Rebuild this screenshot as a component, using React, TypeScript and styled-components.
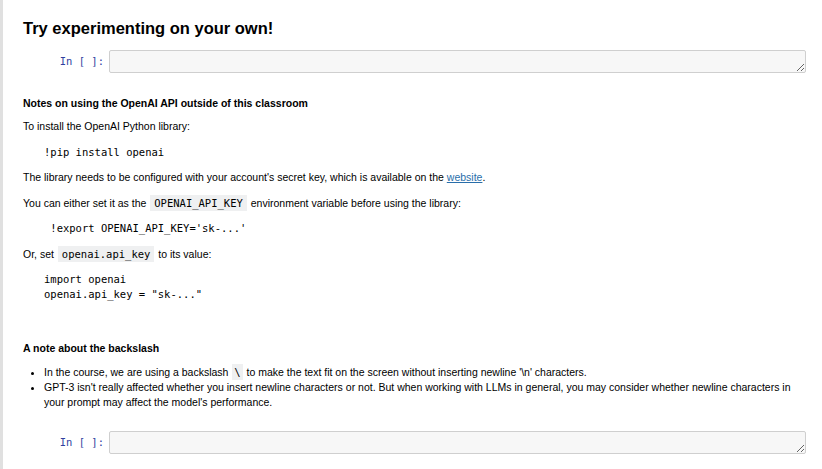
import React from "react";
import styled, { createGlobalStyle } from "styled-components";

const Global = createGlobalStyle`
  html, body { margin: 0; padding: 0; background: #fff; }
  body { font-family: "Liberation Sans", Arial, sans-serif; color: #000; }
`;

const Page = styled.div`
  border-left: 3px solid #e0e0e0;
  min-height: 469px;
  box-sizing: border-box;
  padding: 18px 16px 0 20px;
  display: flex;
  flex-direction: column;
`;

const Heading = styled.h1`
  margin: 0;
  font-size: 16.5px;
  line-height: 20px;
  font-weight: bold;
`;

const InputRow = styled.div<{ $top: number }>`
  display: flex;
  align-items: stretch;
  margin-top: ${(p) => p.$top}px;
`;

const Prompt = styled.div`
  width: 86px;
  box-sizing: border-box;
  padding: 4px 5px 0 0;
  text-align: right;
  font-family: "DejaVu Sans Mono", monospace;
  font-size: 10.5px;
  line-height: 15px;
  color: #303f9f;
`;

const CodeInput = styled.textarea`
  flex: 1;
  height: 23px;
  box-sizing: border-box;
  margin: 0;
  background: #f7f7f7;
  border: 1px solid #cfcfcf;
  border-radius: 2px;
  resize: vertical;
  outline: none;
  font-family: "DejaVu Sans Mono", monospace;
  font-size: 10.5px;
`;

const Bold = styled.p<{ $top: number }>`
  margin: ${(p) => p.$top}px 0 0;
  font-size: 10.5px;
  line-height: 15px;
  font-weight: bold;
`;

const Para = styled.p<{ $top: number }>`
  margin: ${(p) => p.$top}px 0 0;
  font-size: 10.5px;
  line-height: 15px;
  color: #000;
`;

const Pre = styled.pre<{ $top: number }>`
  margin: ${(p) => p.$top}px 0 0;
  padding-left: 21px;
  font-family: "DejaVu Sans Mono", monospace;
  font-size: 10.5px;
  line-height: 15px;
  color: #000;
`;

const Code = styled.code<{ $tight?: boolean }>`
  font-family: "DejaVu Sans Mono", monospace;
  font-size: 10.5px;
  line-height: 1;
  background: #eff0f1;
  padding: ${(p) => (p.$tight ? "2px 2px" : "2px 4px")};
  margin: 0 1px;
`;

const Link = styled.a`
  color: #296eaa;
  text-decoration: underline;
`;

const List = styled.ul<{ $top: number }>`
  margin: ${(p) => p.$top}px 0 0;
  padding-left: 21px;
  font-size: 10.5px;
  line-height: 15px;
`;

const Item = styled.li`
  margin: 0;
`;

export default function App() {
  return (
    <>
      <Global />
      <Page>
        <Heading>Try experimenting on your own!</Heading>
        <InputRow $top={12}>
          <Prompt>In&nbsp;[&nbsp;]:</Prompt>
          <CodeInput />
        </InputRow>
        <Bold $top={23}>Notes on using the OpenAI API outside of this classroom</Bold>
        <Para $top={8}>To install the OpenAI Python library:</Para>
        <Pre $top={11}>!pip install openai</Pre>
        <Para $top={10}>
          The library needs to be configured with your account's secret key, which is available on the{" "}
          <Link href="#">website</Link>.
        </Para>
        <Para $top={11}>
          You can either set it as the <Code>OPENAI_API_KEY</Code> environment variable before using the library:
        </Para>
        <Pre $top={10}> !export OPENAI_API_KEY='sk-...'</Pre>
        <Para $top={11}>
          Or, set <Code>openai.api_key</Code> to its value:
        </Para>
        <Pre $top={10}>{`import openai
openai.api_key = "sk-..."`}</Pre>
        <Bold $top={39}>A note about the backslash</Bold>
        <List $top={9}>
          <Item>
            In the course, we are using a backslash <Code $tight>{"\\"}</Code> to make the text fit on the screen without inserting newline '\n' characters.
          </Item>
          <Item>
            GPT-3 isn't really affected whether you insert newline characters or not. But when working with LLMs in general, you may consider whether newline characters in your prompt may affect the model's performance.
          </Item>
        </List>
        <InputRow $top={21}>
          <Prompt>In&nbsp;[&nbsp;]:</Prompt>
          <CodeInput />
        </InputRow>
      </Page>
    </>
  );
}
